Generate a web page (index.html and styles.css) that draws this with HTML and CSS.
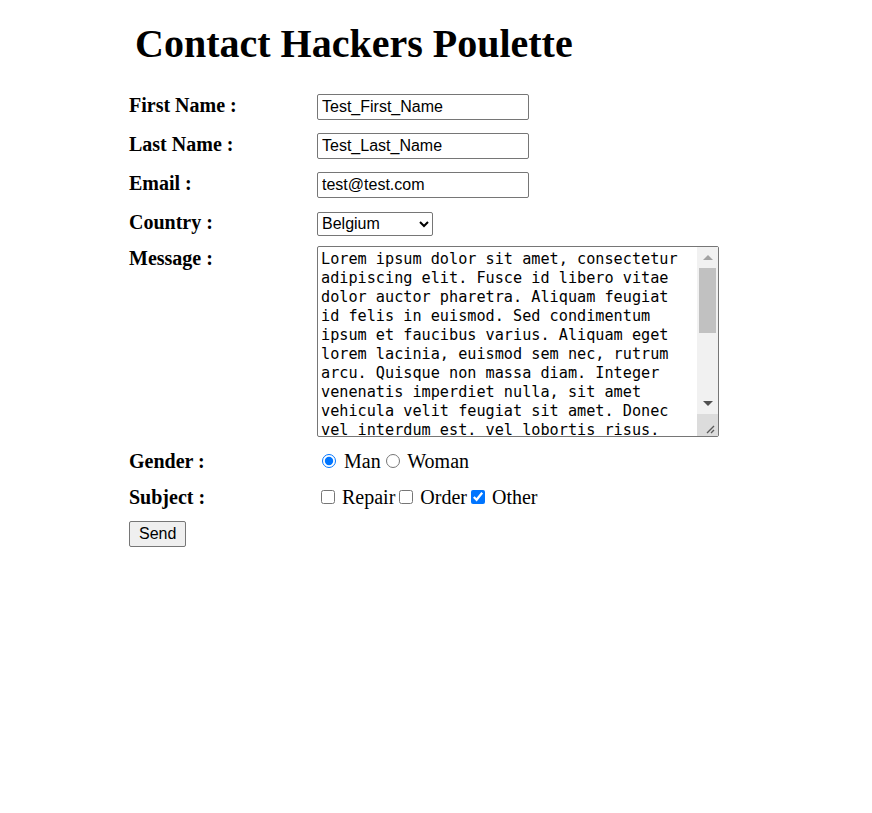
FILE: index.html
```html
<!DOCTYPE html>
<html lang="en">
<head>
<meta charset="utf-8">
<title>Contact Hackers Poulette</title>
<link rel="stylesheet" href="styles.css">
</head>
<body>
<main class="page">
  <h1 class="title">Contact Hackers Poulette</h1>
  <form class="form">
    <label class="label" for="fn">First Name :</label>
    <div class="field"><input class="text" id="fn" type="text" value="Test_First_Name"></div>

    <label class="label" for="ln">Last Name :</label>
    <div class="field"><input class="text" id="ln" type="text" value="Test_Last_Name"></div>

    <label class="label" for="em">Email :</label>
    <div class="field"><input class="text" id="em" type="email" value="test@test.com"></div>

    <label class="label" for="co">Country :</label>
    <div class="field"><select class="select" id="co"><option>Belgium</option><option>France</option><option>Netherlands</option></select></div>

    <label class="label label-top" for="msg">Message :</label>
    <div class="field field-top">
      <div class="area-wrap">
        <textarea class="area" id="msg">Lorem ipsum dolor sit amet, consectetur adipiscing elit. Fusce id libero vitae dolor auctor pharetra. Aliquam feugiat id felis in euismod. Sed condimentum ipsum et faucibus varius. Aliquam eget lorem lacinia, euismod sem nec, rutrum arcu. Quisque non massa diam. Integer venenatis imperdiet nulla, sit amet vehicula velit feugiat sit amet. Donec vel interdum est. vel lobortis risus. Nam ac tortor nec nisi fermentum luctus. Curabitur at justo sed lacus porta tincidunt. Pellentesque habitant morbi tristique senectus et netus et malesuada fames ac turpis egestas. Vivamus sit amet magna eu arcu luctus aliquet. Mauris a ligula vel nibh volutpat aliquet non ut erat. Morbi sagittis, velit at posuere pretium, lectus orci dictum metus.</textarea>
        <div class="vscroll" aria-hidden="true">
          <span class="sb-btn sb-btn-up"><span class="tri tri-up"></span></span>
          <span class="sb-track"><span class="sb-thumb"></span></span>
          <span class="sb-btn"><span class="tri tri-down"></span></span>
          <span class="sb-corner"><svg width="21" height="22" viewBox="0 0 21 22"><path d="M17 12L10 19M17 16L14 19" stroke="#5a5a5a" stroke-width="1.4" fill="none"/></svg></span>
        </div>
      </div>
    </div>

    <span class="label">Gender :</span>
    <div class="field"><input class="opt" type="radio" name="g" id="gm" checked> <label for="gm">Man</label><input class="opt" type="radio" name="g" id="gw"> <label for="gw">Woman</label></div>

    <span class="label">Subject :</span>
    <div class="field"><input class="opt opt-box" type="checkbox" id="s1"> <label for="s1">Repair</label><input class="opt opt-box" type="checkbox" id="s2"> <label for="s2">Order</label><input class="opt opt-box" type="checkbox" id="s3" checked> <label for="s3">Other</label></div>

    <div class="actions"><button class="send" type="submit">Send</button></div>
  </form>
</main>
</body>
</html>
```
FILE: styles.css
```css
html, body {
  margin: 0;
  padding: 0;
  background: #ffffff;
}

body {
  font-family: "Liberation Serif", "Times New Roman", serif;
  font-size: 20px;
  color: #000000;
}

.page {
  padding: 21px 0 0 129px;
}

.title {
  font-size: 40px;
  font-weight: bold;
  margin: 0 0 27px 6px;
  line-height: 46px;
}

.form {
  display: grid;
  grid-template-columns: 188px auto;
  row-gap: 13px;
  align-items: baseline;
  justify-items: start;
}

.label {
  font-weight: bold;
  line-height: 23px;
}

.label-top {
  align-self: start;
  margin-top: -2px;
}

.field {
  line-height: 23px;
}

.field-top {
  align-self: start;
  line-height: 0;
  margin-top: -3px;
}

.text {
  box-sizing: border-box;
  width: 212px;
  height: 26px;
  font-family: "Liberation Sans", Arial, sans-serif;
  font-size: 16px;
  padding: 1px 4px;
  border: 1px solid #767676;
  border-radius: 2px;
  color: #000;
}

.select {
  box-sizing: border-box;
  width: 116px;
  height: 24px;
  font-family: "Liberation Sans", Arial, sans-serif;
  font-size: 16px;
  border: 1px solid #767676;
  border-radius: 2px;
  background: #fff;
  color: #000;
}

.area-wrap {
  position: relative;
  width: 402px;
  height: 191px;
}

.area {
  box-sizing: border-box;
  display: block;
  width: 402px;
  height: 191px;
  margin: 0;
  font-family: "DejaVu Sans Mono", "Liberation Mono", monospace;
  font-size: 15.2px;
  line-height: 19px;
  padding: 3px 30px 2px 3px;
  border: 1px solid #767676;
  border-radius: 2px;
  color: #000;
  resize: none;
  overflow: hidden;
}

.vscroll {
  position: absolute;
  top: 1px;
  right: 1px;
  bottom: 1px;
  width: 21px;
  display: flex;
  flex-direction: column;
  background: #f1f1f1;
}

.sb-btn {
  height: 20px;
  display: flex;
  align-items: center;
  justify-content: center;
  flex: none;
}

.sb-btn-up {
  height: 21px;
}

.tri {
  width: 0;
  height: 0;
  border-left: 5px solid transparent;
  border-right: 5px solid transparent;
}

.tri-up {
  border-bottom: 5px solid #a3a3a3;
}

.tri-down {
  border-top: 5px solid #505050;
}

.sb-track {
  flex: 1;
  padding: 0 2px;
}

.sb-thumb {
  display: block;
  height: 65px;
  background: #c1c1c1;
}

.sb-corner {
  height: 22px;
  flex: none;
  background: #dcdcdc;
  line-height: 0;
}

.opt {
  width: 14px;
  height: 14px;
}

.opt-box {
  margin-right: 2px;
}

.actions {
  grid-column: 1 / 3;
  margin-top: -1px;
}

.send {
  box-sizing: border-box;
  height: 26px;
  padding: 1px 9px;
  font-family: "Liberation Sans", Arial, sans-serif;
  font-size: 16px;
  background: #efefef;
  border: 1px solid #767676;
  border-radius: 2px;
  color: #000;
}
```
